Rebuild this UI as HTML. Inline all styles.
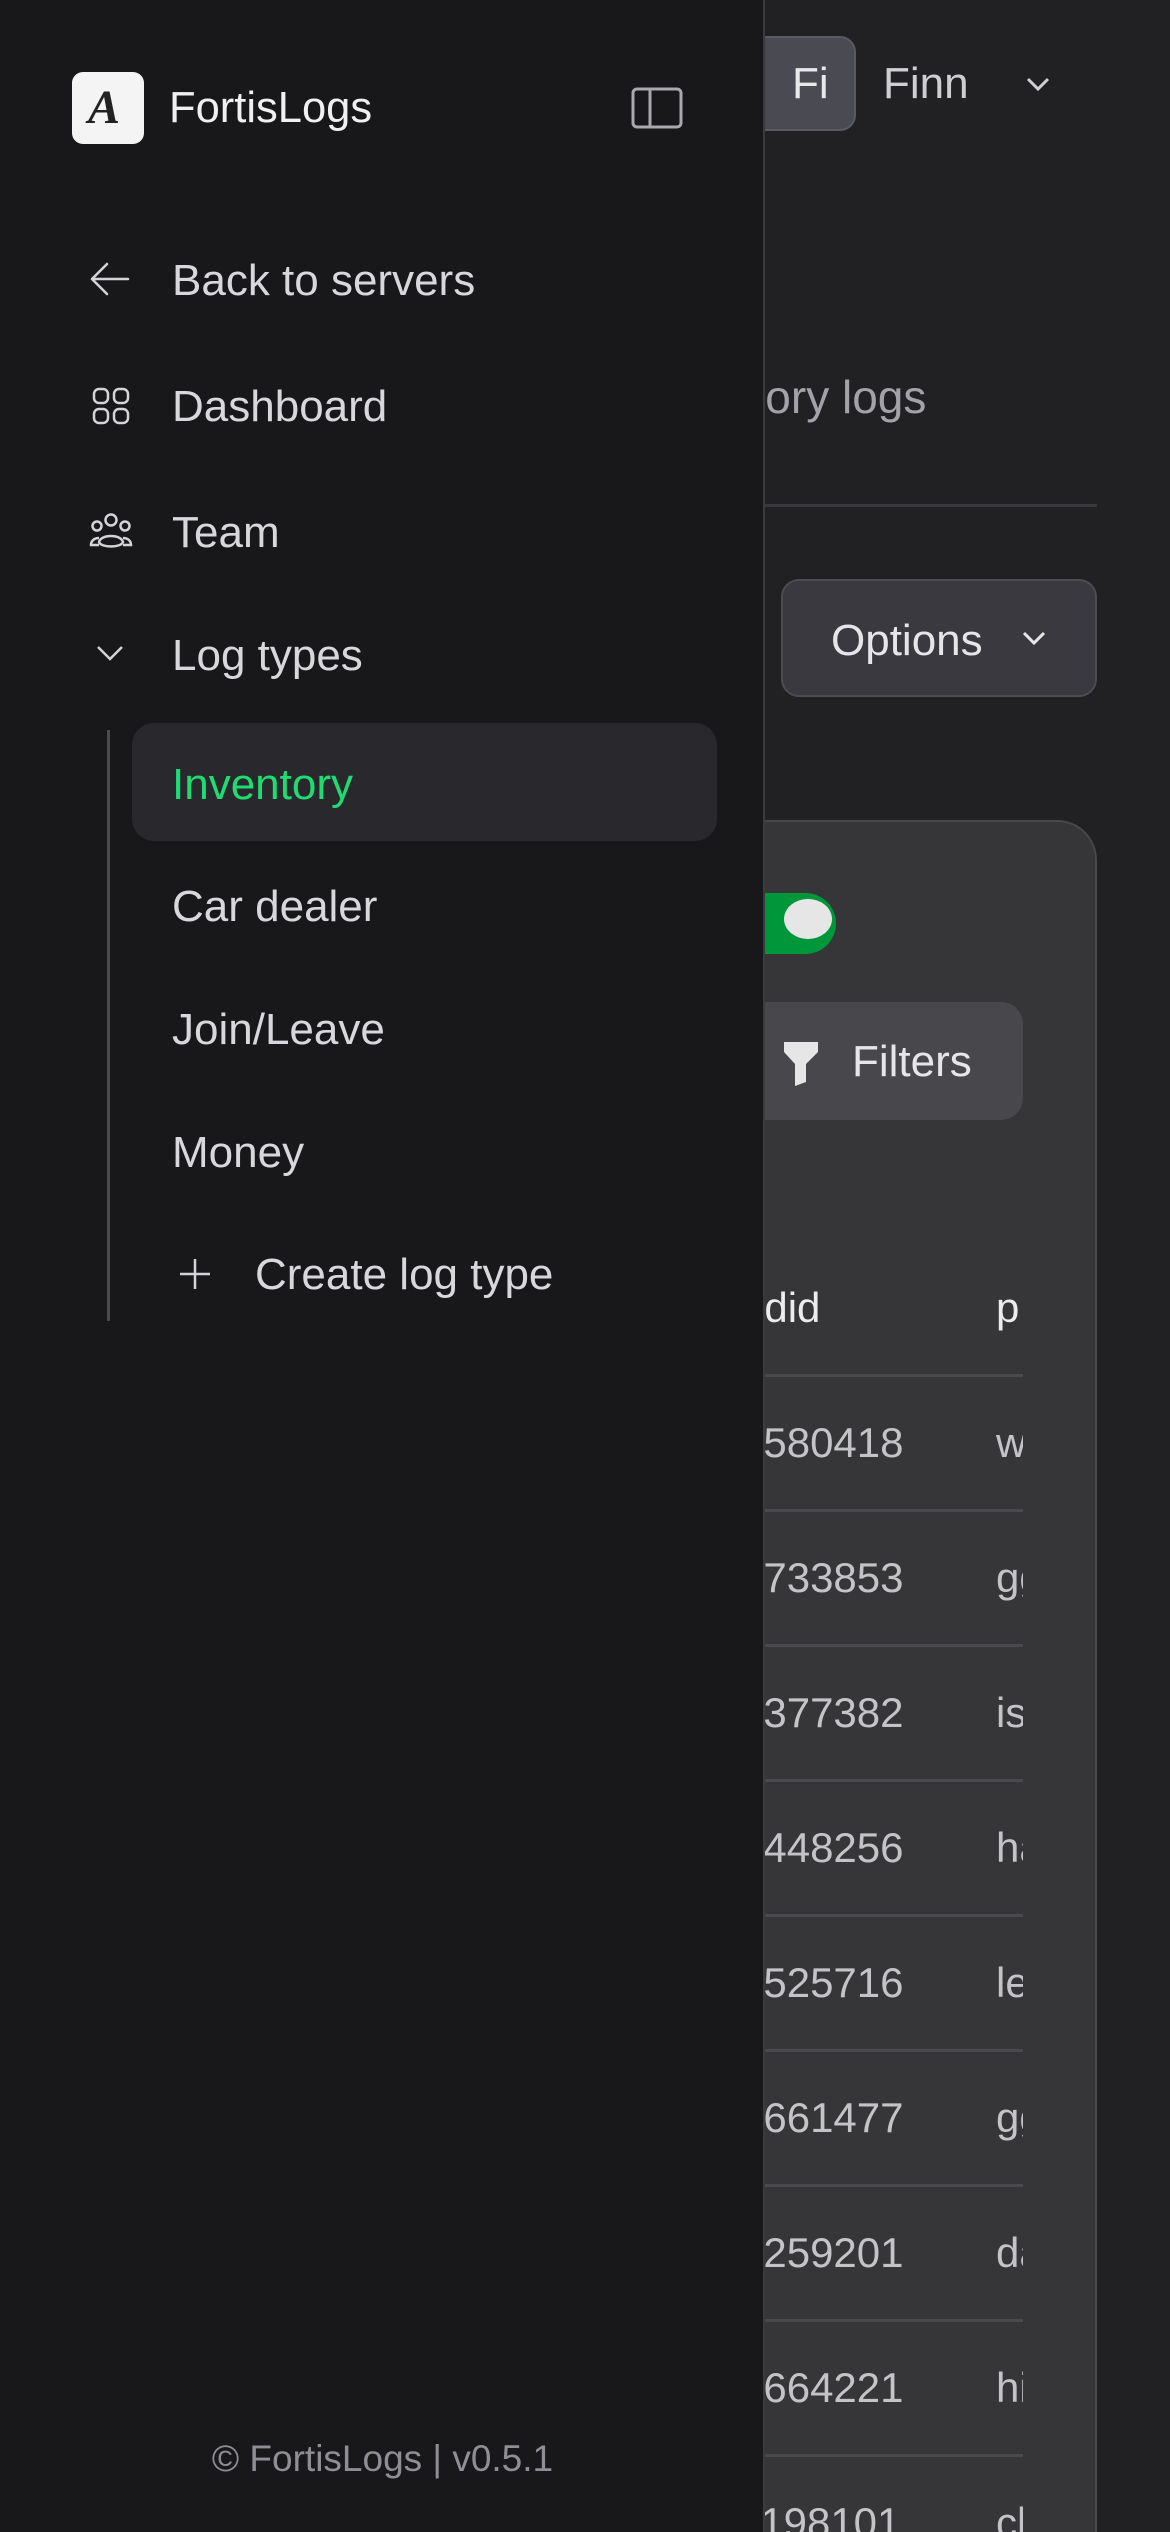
<!DOCTYPE html>
<html><head><meta charset="utf-8"><style>
*{margin:0;padding:0;box-sizing:border-box}
html,body{width:1170px;height:2532px;overflow:hidden}
body{background:#212124;font-family:"Liberation Sans",sans-serif;position:relative}
.a{position:absolute;white-space:nowrap}
#side{position:absolute;left:0;top:0;width:765px;height:2532px;background:#18181b;border-right:2px solid #3a3a3f;z-index:5}
.nav{font-size:44px;color:#d8d8dc;line-height:1}
.t{font-size:42px;color:#c4c4c8;line-height:1}
</style></head><body>
<div class="a" style="left:740px;top:36px;width:116px;height:95px;background:#4a4a52;border:2px solid #5a5a62;border-radius:16px"></div>
<div class="a" style="left:792px;top:62px;font-size:44px;color:#e8e8ea;line-height:1">Fi</div>
<div class="a" style="left:883px;top:62px;font-size:44px;color:#cfcfd3;line-height:1">Finn</div>
<svg class="a" style="left:1024px;top:74px" width="28" height="20" viewBox="0 0 28 20"><path d="M4 5l10 10 10-10" fill="none" stroke="#cfcfd3" stroke-width="3"/></svg>
<div class="a" style="left:640px;top:374px;font-size:46px;color:#a2a2a8;line-height:1">Inventory logs</div>
<div class="a" style="left:700px;top:504px;width:397px;height:3px;background:#38383d"></div>
<div class="a" style="left:781px;top:579px;width:316px;height:118px;background:#39393f;border:2px solid #4c4c52;border-radius:18px"></div>
<div class="a" style="left:831px;top:619px;font-size:44px;color:#e6e6e8;line-height:1">Options</div>
<svg class="a" style="left:1020px;top:628px" width="28" height="20" viewBox="0 0 28 20"><path d="M4 5l10 10 10-10" fill="none" stroke="#e6e6e8" stroke-width="3"/></svg>
<div class="a" style="left:600px;top:820px;width:497px;height:1760px;background:#363639;border:2px solid #48484c;border-radius:40px"></div>
<div class="a" style="left:700px;top:893px;width:136px;height:61px;background:#00963a;border-radius:31px"></div>
<div class="a" style="left:784px;top:899px;width:48px;height:40px;background:#e6e6e6;border-radius:50%"></div>
<div class="a" style="left:700px;top:1002px;width:323px;height:118px;background:#48484c;border-radius:22px"></div>
<svg class="a" style="left:782px;top:1040px" width="38" height="48" viewBox="0 0 38 48"><path d="M2 2h34v10L24 24v18l-11 4V24L2 12z" fill="#e6e6e6"/></svg>
<div class="a" style="left:852px;top:1040px;font-size:44px;color:#e6e6e8;line-height:1">Filters</div>
<div class="a" style="left:741px;top:1287px;font-size:42px;color:#ececee;line-height:1">odid</div>
<div class="a" style="left:996px;top:1287px;font-size:42px;color:#ececee;line-height:1">p</div>
<div class="a" style="left:700px;top:1374px;width:323px;height:3px;background:#4a4a4e"></div>
<div class="a" style="left:700px;top:1420px;width:323px;height:1112px;overflow:hidden">
<div class="t a" style="left:40px;top:2px">1580418</div><div class="t a" style="left:296px;top:2px">wwww</div>
<div class="a" style="left:0;top:89px;width:323px;height:3px;background:#4a4a4e"></div>
<div class="t a" style="left:40px;top:137px">7733853</div><div class="t a" style="left:296px;top:137px">gggg</div>
<div class="a" style="left:0;top:224px;width:323px;height:3px;background:#4a4a4e"></div>
<div class="t a" style="left:40px;top:272px">3377382</div><div class="t a" style="left:296px;top:272px">isss</div>
<div class="a" style="left:0;top:359px;width:323px;height:3px;background:#4a4a4e"></div>
<div class="t a" style="left:40px;top:407px">4448256</div><div class="t a" style="left:296px;top:407px">haaa</div>
<div class="a" style="left:0;top:494px;width:323px;height:3px;background:#4a4a4e"></div>
<div class="t a" style="left:40px;top:542px">5525716</div><div class="t a" style="left:296px;top:542px">leee</div>
<div class="a" style="left:0;top:629px;width:323px;height:3px;background:#4a4a4e"></div>
<div class="t a" style="left:40px;top:677px">1661477</div><div class="t a" style="left:296px;top:677px">gggg</div>
<div class="a" style="left:0;top:764px;width:323px;height:3px;background:#4a4a4e"></div>
<div class="t a" style="left:40px;top:812px">2259201</div><div class="t a" style="left:296px;top:812px">daaa</div>
<div class="a" style="left:0;top:899px;width:323px;height:3px;background:#4a4a4e"></div>
<div class="t a" style="left:40px;top:947px">1664221</div><div class="t a" style="left:296px;top:947px">hiii</div>
<div class="a" style="left:0;top:1034px;width:323px;height:3px;background:#4a4a4e"></div>
<div class="t a" style="left:40px;top:1082px">1198101</div><div class="t a" style="left:296px;top:1082px">clll</div>
</div>

<div id="side">
<div class="a" style="left:72px;top:72px;width:72px;height:72px;background:#f4f4f4;border-radius:11px"></div>
<div class="a" style="left:88px;top:84px;font-family:'Liberation Serif',serif;font-style:italic;font-weight:bold;font-size:48px;color:#222;line-height:1">A</div>
<div class="a" style="left:169px;top:87px;font-size:43.5px;color:#f0f0f2;line-height:1">FortisLogs</div>
<svg class="a" style="left:630px;top:86px" width="54" height="44" viewBox="0 0 54 44"><rect x="3" y="3" width="48" height="38" rx="4" fill="none" stroke="#a8a8ae" stroke-width="3"/><line x1="20" y1="3" x2="20" y2="41" stroke="#a8a8ae" stroke-width="3"/></svg>

<svg class="a" style="left:90px;top:261px" width="40" height="36" viewBox="0 0 40 36"><path d="M38 18H3M17 3L2 18l15 15" fill="none" stroke="#d4d4d8" stroke-width="2.5" stroke-linecap="round" stroke-linejoin="round"/></svg>
<div class="a nav" style="left:172px;top:259px">Back to servers</div>

<svg class="a" style="left:92px;top:387px" width="38" height="38" viewBox="0 0 38 38" fill="none" stroke="#d4d4d8" stroke-width="2.5"><rect x="2" y="2" width="14" height="14" rx="5"/><rect x="22" y="2" width="14" height="14" rx="5"/><rect x="2" y="22" width="14" height="14" rx="5"/><rect x="22" y="22" width="14" height="14" rx="5"/></svg>
<div class="a nav" style="left:172px;top:385px">Dashboard</div>

<svg class="a" style="left:89px;top:512px" width="44" height="40" viewBox="0 0 44 40" fill="none" stroke="#d4d4d8" stroke-width="2.5"><circle cx="22" cy="8" r="5.5"/><circle cx="8" cy="14" r="4.5"/><circle cx="36" cy="14" r="4.5"/><path d="M10 30c2-8 22-8 24 0c-2 6-22 6-24 0z"/><path d="M10 26c-5 0-8 3-8 7h8M34 26c5 0 8 3 8 7h-8"/></svg>
<div class="a nav" style="left:172px;top:511px">Team</div>

<svg class="a" style="left:96px;top:644px" width="28" height="18" viewBox="0 0 28 18"><path d="M2 3l12 12L26 3" fill="none" stroke="#d4d4d8" stroke-width="2.5"/></svg>
<div class="a nav" style="left:172px;top:634px">Log types</div>

<div class="a" style="left:107px;top:730px;width:3px;height:591px;background:#4a4a50"></div>
<div class="a" style="left:132px;top:723px;width:585px;height:118px;background:#29292d;border-radius:22px"></div>
<div class="a nav" style="left:172px;top:763px;color:#1fdc72">Inventory</div>
<div class="a nav" style="left:172px;top:885px">Car dealer</div>
<div class="a nav" style="left:172px;top:1008px">Join/Leave</div>
<div class="a nav" style="left:172px;top:1131px">Money</div>
<svg class="a" style="left:178px;top:1257px" width="34" height="34" viewBox="0 0 34 34"><path d="M17 2v30M2 17h30" stroke="#d4d4d8" stroke-width="2.5"/></svg>
<div class="a nav" style="left:255px;top:1253px">Create log type</div>

<div class="a" style="left:0;top:2440px;width:765px;text-align:center;font-size:37px;color:#8e8e94;line-height:1">© FortisLogs | v0.5.1</div>
</div>
</body></html>
